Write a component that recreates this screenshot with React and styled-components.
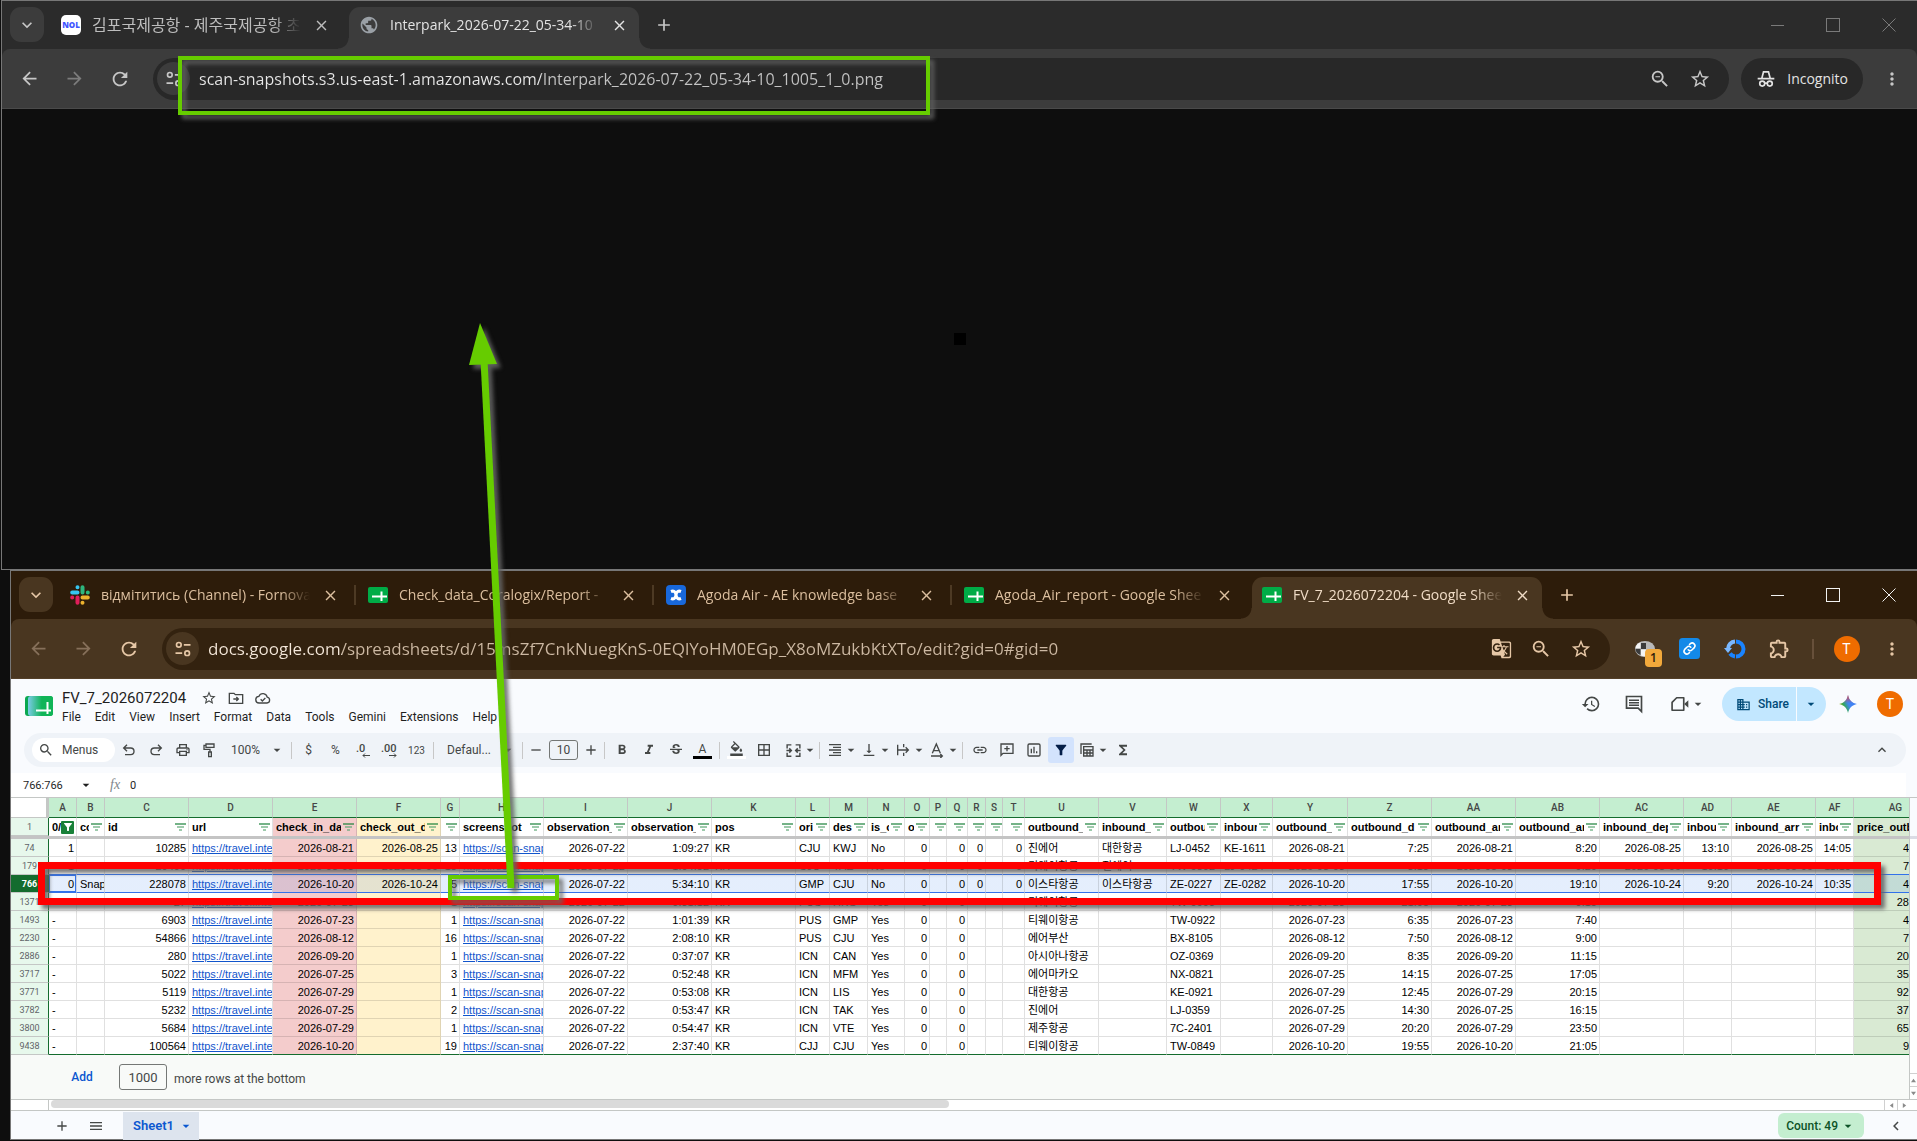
import React from 'react';
import styled, { createGlobalStyle, ThemeProvider, css } from 'styled-components';
import {
  MdArrowBack,
  MdArrowForward,
  MdRefresh,
  MdStarBorder,
  MdMoreVert,
  MdAdd,
  MdClose,
  MdSearch,
  MdFormatBold,
  MdFormatItalic,
  MdStrikethroughS,
  MdFormatColorFill,
  MdBorderAll,
  MdLink,
  MdFunctions,
  MdHistory,
  MdMenu,
  MdKeyboardArrowUp,
  MdKeyboardArrowDown,
  MdChevronLeft,
  MdZoomOut,
  MdGTranslate,
  MdDomain,
  MdPublic,
  MdOutlineExtension,
  MdArrowDropDown,
  MdOutlinePrint,
  MdFilterAlt,
  MdVerticalAlignBottom,
  MdFormatAlignRight,
} from 'react-icons/md';

const incognitoTheme = {
  strip: '#2b2b2b',
  bar: '#3c3c3c',
  barLine: '#4a4a4a',
  field: '#282828',
  chip: '#3c3c3c',
  icon: '#c7c7c7',
  dim: '#7c7c7c',
  tabText: '#bdbdbd',
  activeText: '#e3e3e3',
  host: '#e8e8e8',
  path: '#c4c4c4',
  control: '#7a7a7a',
  divider: '#4a4a4a',
};

const brownTheme = {
  strip: '#2d1c0a',
  bar: '#493620',
  barLine: '#544029',
  field: '#33220f',
  chip: '#493620',
  icon: '#e6c7a6',
  dim: '#86705a',
  tabText: '#dcbf9f',
  activeText: '#f0dcc6',
  host: '#f5e8da',
  path: '#cdb9a3',
  control: '#f2f2f2',
  divider: '#4d3a24',
};

const GlobalStyle = createGlobalStyle`
  * {
    box-sizing: border-box;
  }

  body {
    margin: 0;
    background: #0e0e0e;
    overflow: hidden;
    font-family: Roboto, 'Noto Sans CJK KR', sans-serif;
  }

  button, input, select {
    font: inherit;
    color: inherit;
    margin: 0;
    padding: 0;
    border: 0;
    background: none;
    outline: none;
  }

  svg {
    flex: none;
  }
`;

const Desktop = styled.main`
  position: relative;
  display: flex;
  flex-direction: column;
  min-height: 100vh;
  padding-bottom: 1px;
  overflow: hidden;
`;

/* ---------- browser chrome ---------- */

const Window = styled.section`
  display: flex;
  flex-direction: column;
  min-width: 0;
  margin-left: ${({ $left }) => $left}px;
  border: 1px solid #777;
  border-right: 0;
  background: ${({ theme }) => theme.strip};
  font-family: 'Open Sans', 'Noto Sans CJK KR', sans-serif;
  ${({ $grow }) => $grow && css`flex: 1;`}
`;

const TabStrip = styled.header`
  display: flex;
  align-items: flex-start;
  height: 48px;
  padding: 6px 0 0 8px;
  color: ${({ theme }) => theme.icon};
`;

const TabSearch = styled.button`
  display: flex;
  align-items: center;
  justify-content: center;
  width: 34px;
  height: 35px;
  margin-right: 7px;
  border-radius: 11px;
  background: ${({ theme }) => theme.chip};
`;

const Tabs = styled.nav`
  display: flex;
  gap: 8px;
  min-width: 0;
`;

const Tab = styled.div`
  position: relative;
  display: flex;
  align-items: center;
  width: 290px;
  height: 42px;
  padding: 0 10px 6px;
  color: ${({ theme }) => theme.tabText};

  ${({ $divided }) => $divided && css`
    &::after {
      content: '';
      position: absolute;
      right: -6px;
      top: 8px;
      width: 2px;
      height: 20px;
      background: ${({ theme }) => theme.divider};
    }
  `}

  ${({ $active, theme }) => $active && css`
    color: ${theme.activeText};
    background: ${theme.bar};
    border-radius: 11px 11px 0 0;

    &::before,
    &::after {
      content: '';
      position: absolute;
      bottom: 0;
      width: 11px;
      height: 11px;
    }

    &::before {
      right: 100%;
      background: radial-gradient(circle at 0 0, transparent 10px, ${theme.bar} 11px);
    }

    &::after {
      left: 100%;
      background: radial-gradient(circle at 100% 0, transparent 10px, ${theme.bar} 11px);
    }
  `}
`;

const TabTitle = styled.span`
  flex: 1;
  margin: 0 10px 0 11px;
  overflow: hidden;
  white-space: nowrap;
  font-size: 14px;
  line-height: 20px;
  mask-image: linear-gradient(to right, #000 calc(100% - 28px), transparent);

  &:lang(ko) {
    font-size: 16px;
  }
`;

const TabClose = styled.button`
  display: flex;
  align-items: center;
  justify-content: center;
  width: 20px;
  height: 20px;
`;

const NewTab = styled.button`
  display: flex;
  align-items: center;
  justify-content: center;
  width: 34px;
  height: 36px;
  margin-left: 8px;
`;

const WindowControls = styled.div`
  display: flex;
  margin-left: auto;
  color: ${({ theme }) => theme.control};

  button {
    display: flex;
    align-items: center;
    justify-content: center;
    width: 56px;
    height: 36px;
  }
`;

const AddressBar = styled.div`
  display: flex;
  align-items: center;
  height: 60px;
  padding: 0 3px 0 5px;
  border-bottom: 1px solid ${({ theme }) => theme.barLine};
  border-radius: 8px 8px 0 0;
  background: ${({ theme }) => theme.bar};
  color: ${({ theme }) => theme.icon};
`;

const BarButton = styled.button`
  position: relative;
  display: flex;
  align-items: center;
  justify-content: center;
  width: ${({ $wide }) => $wide || 45}px;
  height: 42px;
  color: ${({ theme, $dim }) => ($dim ? theme.dim : 'inherit')};
`;

const Omnibox = styled.div`
  display: flex;
  align-items: center;
  flex: 1;
  min-width: 0;
  height: 42px;
  margin: 0 12px 0 11px;
  padding: 0 9px 0 4px;
  border-radius: 21px;
  background: ${({ theme }) => theme.field};
`;

const SiteInfo = styled.button`
  display: flex;
  align-items: center;
  justify-content: center;
  flex: none;
  width: 33px;
  height: 33px;
  margin-right: 9px;
  border-radius: 50%;
  background: ${({ theme }) => theme.bar};
`;

const UrlInput = styled.input`
  flex: 1;
  min-width: 0;
  height: 30px;
  font-size: ${({ $large }) => ($large ? 17 : 16)}px;
  color: transparent;
  background: linear-gradient(
    to right,
    ${({ theme }) => theme.host} ${({ $host }) => $host}px,
    ${({ theme }) => theme.path} ${({ $host }) => $host}px
  );
  background-clip: text;
  -webkit-background-clip: text;
`;

const IncognitoChip = styled.button`
  display: flex;
  align-items: center;
  gap: 11px;
  height: 42px;
  margin-right: 6px;
  padding: 0 15px;
  border-radius: 21px;
  background: ${({ theme }) => theme.field};
  color: #e3e3e3;
  font-size: 14px;
`;

const BarDivider = styled.span`
  width: 2px;
  height: 20px;
  margin: 0 10px;
  background: #67503a;
`;

const Avatar = styled.span`
  display: flex;
  align-items: center;
  justify-content: center;
  width: 26px;
  height: 26px;
  border-radius: 50%;
  background: #ef6c00;
  color: #fff;
  font-family: Roboto, sans-serif;
  font-size: 14px;
`;

const ExtensionBadge = styled.span`
  position: absolute;
  left: 23px;
  top: 21px;
  width: 17px;
  height: 18px;
  border-radius: 4px;
  background: #f2a93b;
  color: #2d1c0a;
  font-size: 12px;
  font-weight: 600;
  line-height: 18px;
`;

const BlankImage = styled.div`
  display: flex;
  align-items: center;
  justify-content: center;
  flex: 1;
  background: #0e0e0e;

  span {
    width: 12px;
    height: 12px;
    background: #000;
  }
`;

/* ---------- spreadsheet ---------- */

const Sheet = styled.div`
  display: flex;
  flex-direction: column;
  background: #f9fbfe;
  color: #444746;
  font-family: Roboto, 'Noto Sans CJK KR', sans-serif;
`;

const DocHeader = styled.div`
  display: flex;
  height: 54px;
  padding: 8px 14px 0;
`;

const DocLogo = styled.a`
  height: 20px;
  margin: 9px 9px 0 0;
`;

const TitleRow = styled.div`
  display: flex;
  align-items: center;
  height: 22px;
`;

const TitleInput = styled.input`
  width: 133px;
  color: #1f1f1f;
  font-size: 15px;
`;

const TitleButton = styled.button`
  display: flex;
  align-items: center;
  justify-content: center;
  width: 27px;
`;

const MenuBar = styled.nav`
  display: flex;
  gap: 14px;
  color: #1f1f1f;
  font-size: 12px;
  line-height: 17px;
`;

const HeaderActions = styled.div`
  display: flex;
  align-items: center;
  gap: 15px;
  height: 34px;
  margin-left: auto;
`;

const HeaderButton = styled.button`
  display: flex;
  align-items: center;
  justify-content: center;
  min-width: 28px;
`;

const MeetButton = styled(HeaderButton)`
  width: 44px;
  padding-left: 6px;
`;

const ShareGroup = styled.div`
  display: flex;
  height: 34px;
  margin-right: -7px;
  border-radius: 17px;
  overflow: hidden;
  background: #c2e7ff;
  color: #004a77;
  font-size: 12px;
  font-weight: 500;

  button {
    display: flex;
    align-items: center;
    gap: 7px;
    padding: 0 7px 0 14px;
  }

  button + button {
    padding: 0 7px 0 6px;
    border-left: 1px solid #f9fbfe;
  }
`;

const Toolbar = styled.div`
  display: flex;
  align-items: center;
  height: 34px;
  margin: 0 11px 6px 13px;
  padding: 0 11px 0 8px;
  border-radius: 17px;
  background: #eff3f8;
`;

const MenuSearch = styled.button`
  display: flex;
  align-items: center;
  gap: 8px;
  width: 83px;
  height: 24px;
  padding-left: 6px;
  border-radius: 12px;
  background: #fff;
  font-size: 12px;
`;

const Tool = styled.button`
  display: flex;
  align-items: center;
  justify-content: center;
  width: 27px;
  height: 26px;
  font-size: ${({ $small }) => ($small ? 10 : 12)}px;
`;

const StepTool = styled(Tool)`
  width: 20px;
`;

const SplitTool = styled.button`
  display: flex;
  align-items: center;
  width: ${({ $wide }) => ($wide ? 39 : 34)}px;
  height: 26px;
  padding-left: ${({ $wide }) => ($wide ? 8 : 4)}px;
`;

const ActiveTool = styled(Tool)`
  width: 26px;
  margin: 0 1px;
  border-radius: 3px;
  background: #d3e3fd;
  color: #041e49;
`;

const SwatchTool = styled(Tool)`
  flex-direction: column;

  &::after {
    content: '';
    width: 19px;
    height: 3px;
    background: ${({ $swatch }) => $swatch};
  }
`;

const ToolDivider = styled.span`
  width: 1px;
  height: 17px;
  margin: 0 3px;
  background: #c7c7c7;
`;

const Picker = styled.label`
  display: flex;
  align-items: center;
  width: ${({ $width }) => $width}px;
  padding: 0 3px 0 ${({ $indent }) => $indent}px;
  font-size: 12px;

  select {
    flex: 1;
    min-width: 0;
    appearance: none;
  }
`;

const SizeInput = styled.input`
  width: 29px;
  height: 20px;
  margin: 0 3px;
  border: 1px solid #747775;
  border-radius: 3px;
  text-align: center;
  font-size: 12px;
`;

const FormulaBar = styled.div`
  display: flex;
  align-items: center;
  height: 24px;
  margin-right: 11px;
  padding-left: 12px;
  background: #fff;
  color: #1f1f1f;
  font-size: 11px;
`;

const NameBox = styled.input`
  width: 55px;
`;

const FormulaMark = styled.label`
  width: 32px;
  margin-left: 4px;
  padding-left: 12px;
  color: #80868b;
  font-family: 'Liberation Serif', serif;
  font-size: 14px;
  font-style: italic;
`;

const FormulaInput = styled.input`
  flex: 1;
`;

const GridArea = styled.div`
  display: flex;
  border-top: 1px solid #c4c7c5;
`;

const Viewport = styled.div`
  flex: 1;
  min-width: 0;
  overflow: hidden;
`;

const Grid = styled.table`
  width: 100%;
  min-width: 1927px;
  table-layout: fixed;
  border-collapse: separate;
  border-spacing: 0;
  background: #fff;
  color: #000;
  font-family: 'Liberation Sans', 'Noto Sans CJK KR', sans-serif;
  font-size: 11px;
  line-height: 16px;
`;

const ColumnHead = styled.th`
  height: 20px;
  padding: 0;
  border-right: 1px solid #c4c7c5;
  border-bottom: 1px solid #146c2e;
  background: #c4eed0;
  color: #444746;
  font-family: Roboto, sans-serif;
  font-size: 10px;
  font-weight: 500;
  line-height: 18px;
`;

const Corner = styled.td`
  padding: 0;
  border-right: 3px solid #c4c7c5;
  border-bottom: 1px solid #c4c7c5;
  background: #fff;
`;

const RowHead = styled.th`
  height: 18px;
  padding: 1px 0 0;
  border-right: 1px solid #146c2e;
  border-bottom: 1px solid #c4c7c5;
  background: ${({ $selected }) => ($selected ? '#146c2e' : '#e7f8ec')};
  color: ${({ $selected }) => ($selected ? '#fff' : '#5f6368')};
  font-family: Roboto, sans-serif;
  font-size: 9px;
  font-weight: ${({ $selected }) => ($selected ? 700 : 400)};
`;

const Cell = styled.td`
  height: 18px;
  padding: 1px ${({ $cut }) => ($cut ? 28 : 2)}px 0 3px;
  overflow: hidden;
  white-space: nowrap;
  text-align: ${({ $right }) => ($right ? 'right' : 'left')};
  border-right: 1px solid rgba(0, 0, 0, 0.12);
  border-bottom: 1px solid ${({ $line }) => $line || 'rgba(0, 0, 0, 0.12)'};
  background-color: ${({ $fill }) => $fill || '#fff'};
  ${({ $selected }) => $selected && css`
    background-image: linear-gradient(rgba(14, 101, 235, 0.11), rgba(14, 101, 235, 0.11));
  `}
  ${({ $current }) => $current && css`
    box-shadow: inset 0 0 0 1px #3271ea;
  `}

  a {
    color: #1155cc;
  }
`;

const FieldCell = styled.td`
  height: 18px;
  padding: 0;
  border-right: 1px solid rgba(0, 0, 0, 0.12);
  background: ${({ $fill }) => $fill || '#fff'};
  font-weight: 700;
`;

const Field = styled.div`
  display: flex;
  align-items: center;
  gap: ${({ $tight }) => ($tight ? 0 : 2)}px;
  height: 18px;
  padding: 0 2px 0 3px;

  span {
    flex: 1;
    min-width: 0;
    overflow: hidden;
    white-space: nowrap;
  }

  button {
    display: flex;
  }
`;

const FilterOn = styled.button`
  width: 13px;
  height: 13px;
  align-items: center;
  justify-content: center;
  border-radius: 1px;
  background: #188038;
  color: #fff;
`;

const FreezeLine = styled.td`
  height: 3px;
  padding: 0;
  background: #c4c4c4;
`;

const AddRows = styled.div`
  display: flex;
  align-items: center;
  height: 44px;
  padding-left: 48px;
  background: #f8faf8;
  font-size: 13px;

  button {
    width: 60px;
    padding-right: 14px;
    color: #0b57d0;
    font-size: 12px;
    font-weight: 500;
    text-align: center;
  }

  input {
    width: 48px;
    height: 26px;
    margin-right: 7px;
    border: 1px solid #747775;
    border-radius: 3px;
    text-align: center;
  }

  label {
    padding-top: 4px;
    font-size: 12px;
  }
`;

const VerticalScroll = styled.div`
  display: flex;
  flex-direction: column;
  width: 8px;
  border-left: 1px solid #c4c7c5;
  background: linear-gradient(#f9fbfe 38px, #dadce5 38px, #dadce5 41px, #fff 41px);

  button {
    display: flex;
    align-items: center;
    justify-content: center;
    height: 13px;
    border-top: 1px solid #d0d0d0;
    color: #8a8a8a;
  }

  button:first-child {
    margin-top: auto;
  }
`;

const HorizontalScroll = styled.div`
  display: flex;
  height: 11px;
  padding-left: 37px;
  border-top: 1px solid #c4c7c5;
  background: #fff;

  button {
    display: flex;
    align-items: center;
    justify-content: center;
    width: 13px;
    border-left: 1px solid #d0d0d0;
    color: #8a8a8a;
  }

  button:last-child {
    width: 20px;
    padding-right: 7px;
  }
`;

const Track = styled.div`
  flex: 1;
  padding-left: 2px;
  border-left: 1px solid #c4c7c5;

  &::before {
    content: '';
    display: block;
    width: 49%;
    height: 8px;
    border-radius: 4px;
    background: #dadada;
  }
`;

const SheetBar = styled.footer`
  display: flex;
  align-items: center;
  height: 29px;
  padding: 1px 4px 0 34px;
  border-top: 1px solid #c4c7c5;
`;

const SheetBarButton = styled.button`
  display: flex;
  align-items: center;
  justify-content: center;
  width: 34px;
  height: 28px;
`;

const SheetTab = styled.button`
  display: flex;
  align-items: center;
  gap: 4px;
  height: 28px;
  margin-left: 10px;
  padding: 0 5px 0 10px;
  background: #dde4ee;
  color: #0b57d0;
  font-size: 13px;
  font-weight: 600;
`;

const CountChip = styled.button`
  display: flex;
  align-items: center;
  gap: 2px;
  height: 25px;
  margin: 0 15px 0 auto;
  padding: 0 8px;
  border-radius: 6px;
  background: #c4eed0;
  color: #0d5327;
  font-size: 12px;
  font-weight: 500;
`;

/* ---------- markup drawn over the windows ---------- */

const Mark = styled.div`
  position: absolute;
  left: ${({ $x }) => $x}px;
  top: ${({ $y }) => $y}px;
  width: ${({ $w }) => $w}px;
  height: ${({ $h }) => $h}px;
  border: ${({ $line }) => $line}px solid ${({ $color }) => $color};
  filter: drop-shadow(4px 4px 2px rgba(100, 100, 100, 0.9));
  pointer-events: none;
`;

const Arrow = styled.svg`
  position: absolute;
  left: 460px;
  top: 315px;
  filter: drop-shadow(4px 4px 2px rgba(100, 100, 100, 0.9));
  pointer-events: none;
`;

/* ---------- icons ---------- */

const Line = ({ size = 16, width = 2, children }) => (
  <svg
    width={size}
    height={size}
    viewBox="0 0 24 24"
    fill="none"
    stroke="currentColor"
    strokeWidth={width}
    aria-hidden="true"
  >
    {children}
  </svg>
);

const TuneIcon = () => (
  <Line size={20}>
    <circle cx="7" cy="7" r="2.8" />
    <path d="M13 7h8M3 17h8" />
    <circle cx="17" cy="17" r="2.8" />
  </Line>
);

const UndoIcon = () => (
  <Line>
    <path d="M6 19h8.500a5 5 0 0 0 0-10H4.500M9 4 4 9l5 5" />
  </Line>
);

const RedoIcon = () => (
  <Line>
    <path d="M18 19H9.500a5 5 0 0 1 0-10h10M15 4l5 5-5 5" />
  </Line>
);

const RollerIcon = () => (
  <Line>
    <path d="M6 3h12v5H6zM6 5H3v6h9v4M10 15h4v7h-4z" />
  </Line>
);

const MergeIcon = () => (
  <Line size={17}>
    <path d="M9 4H3v5M15 4h6v5M9 20H3v-5M15 20h6v-5M2 12h7M22 12h-7M6 9l3 3-3 3M18 9l-3 3 3 3" />
  </Line>
);

const WrapIcon = () => (
  <Line>
    <path d="M4 4v16M13 3v5M13 16v5M4 12h16M16 8l4 4-4 4" />
  </Line>
);

const RotateIcon = () => (
  <Line>
    <path d="M5 17 11 3l6 14M7 13h8M3 21h17M17 18l3 3-3 3" />
  </Line>
);

const CommentAddIcon = () => (
  <Line>
    <path d="M3 20V3h18v14H6zM12 6v8M8 10h8" />
  </Line>
);

const ChartIcon = () => (
  <Line>
    <rect x="3" y="3" width="18" height="18" rx="2" />
    <path d="M8 10v7M12 7v10M16 14v3" />
  </Line>
);

const TableIcon = () => (
  <Line>
    <path d="M3 18V3h16M7 7h14v14H7zM7 12h14M7 16.500h14M12 12v9M16.500 12v9" />
  </Line>
);

const DecimalIcon = ({ more }) => (
  <svg width="18" height="18" viewBox="0 0 18 18" aria-hidden="true">
    <text x={more ? 0 : 2} y="11" fontSize="11" fontWeight="500" fill="currentColor">
      {more ? '.00' : '.0'}
    </text>
    <path
      d={more ? 'M8 14.500h7M13 12.500l2 2-2 2' : 'M16 14.500H9M11 12.500l-2 2 2 2'}
      fill="none"
      stroke="currentColor"
    />
  </svg>
);

const FolderMoveIcon = () => (
  <Line>
    <path d="M2 5h7l2 2h11v13H2zM8 13.500h7M12.500 10.500l3 3-3 3" />
  </Line>
);

const CloudDoneIcon = () => (
  <Line>
    <path d="M6.500 19.500a5 5 0 0 1-.6-10A6.500 6.500 0 0 1 18.300 10.800a4.400 4.400 0 0 1-.3 8.700zM8.500 14l2.500 2.500 4.500-4.500" />
  </Line>
);

const CommentIcon = () => (
  <Line size={20}>
    <path d="M3 3h18v18l-4-4H3zM6 7.500h12M6 10.500h12M6 13.500h12" />
  </Line>
);

const MeetIcon = () => (
  <Line size={20}>
    <path d="M8 4.500h8.500v15H2.500V10z" strokeLinejoin="round" />
    <path d="M17 12l5-4.500v9z" fill="currentColor" stroke="none" />
  </Line>
);

const IncognitoIcon = () => (
  <Line size={20}>
    <path d="M2 11.500h20M7 11l2-7.500h6L17 11" />
    <circle cx="7.500" cy="17.500" r="3" />
    <circle cx="16.500" cy="17.500" r="3" />
    <path d="M10.500 17h3" />
  </Line>
);

const FilterLines = () => (
  <svg width="11" height="8" viewBox="0 0 11 8" aria-hidden="true">
    <path d="M0 1h11" stroke="#188038" strokeWidth="1.200" />
    <path d="M2 4h7" stroke="#5da675" strokeWidth="1.200" />
    <path d="M4 7h3" stroke="#5da675" strokeWidth="1.200" />
  </svg>
);

const Triangle = ({ d }) => (
  <svg width="5" height="5" viewBox="0 0 6 6" aria-hidden="true">
    <path d={d} fill="currentColor" />
  </svg>
);

const SheetsFavicon = () => (
  <svg width="20" height="16" viewBox="0 0 20 16" aria-hidden="true">
    <rect width="20" height="16" rx="2" fill="#00ac47" />
    <path d="M4 9.500h15M13.500 4.500V14" stroke="#fff" strokeWidth="2" />
  </svg>
);

const SheetsLogo = () => (
  <svg width="28" height="20" viewBox="0 0 28 20" aria-hidden="true">
    <defs>
      <linearGradient id="sheetsFill">
        <stop offset="0" stopColor="#7ccbe8" />
        <stop offset="0.550" stopColor="#10b457" />
      </linearGradient>
    </defs>
    <rect width="28" height="20" rx="3" fill="#0aa850" />
    <rect x="3" width="25" height="20" rx="3" fill="url(#sheetsFill)" />
    <path d="M11 14.500h15M22.500 6v12" stroke="#fff" strokeWidth="2" />
  </svg>
);

const SlackIcon = () => (
  <svg width="20" height="20" viewBox="0 0 20 20" strokeWidth="4" strokeLinecap="round" aria-hidden="true">
    <path d="M7.500 2.200v.01M2.200 7.500h5.300" stroke="#36c5f0" />
    <path d="M17.800 7.500h.01M12.500 2.200v5.300" stroke="#2eb67d" />
    <path d="M12.500 17.800v.01M12.500 12.500h5.300" stroke="#ecb22e" />
    <path d="M2.200 12.500h.01M7.500 12.500v5.300" stroke="#e01e5a" />
  </svg>
);

const ConfluenceIcon = () => (
  <svg width="20" height="20" viewBox="0 0 20 20" aria-hidden="true">
    <rect width="20" height="20" rx="4" fill="#1868db" />
    <path
      d="M5 6.500c2.500-1 4.500 0 5 3.500.5-3.500 2.500-4.500 5-3.500M5 13.500c2.500 1 4.500 0 5-3.500.5 3.500 2.500 4.500 5 3.500"
      fill="none"
      stroke="#fff"
      strokeWidth="3"
    />
  </svg>
);

const NolIcon = () => (
  <svg width="20" height="20" viewBox="0 0 20 20" aria-hidden="true">
    <rect width="20" height="20" rx="5" fill="#fff" />
    <text x="10" y="13" textAnchor="middle" fontSize="8" fontWeight="800" fill="#4154ff">
      NOL
    </text>
  </svg>
);

const GeminiIcon = () => (
  <svg width="18" height="18" viewBox="0 0 18 18" aria-hidden="true">
    <defs>
      <linearGradient id="spark" x1="0" y1="0.800" x2="1" y2="0.300">
        <stop offset="0" stopColor="#fbbc04" />
        <stop offset="0.300" stopColor="#34a853" />
        <stop offset="0.550" stopColor="#4285f4" />
        <stop offset="1" stopColor="#3c7bf0" />
      </linearGradient>
      <linearGradient id="sparkTop" x1="0" y1="0" x2="0" y2="1">
        <stop offset="0" stopColor="#ea4335" />
        <stop offset="0.450" stopColor="#ea4335" stopOpacity="0" />
      </linearGradient>
    </defs>
    <path d="M9 0c1 5 4 8 9 9-5 1-8 4-9 9-1-5-4-8-9-9 5-1 8-4 9-9z" fill="url(#spark)" />
    <path d="M9 0c1 5 4 8 9 9-5 1-8 4-9 9-1-5-4-8-9-9 5-1 8-4 9-9z" fill="url(#sparkTop)" />
  </svg>
);

const ShieldIcon = () => (
  <svg width="22" height="18" viewBox="0 0 22 18" aria-hidden="true">
    <ellipse cx="11" cy="9" rx="10" ry="8" fill="#b9b9b9" />
    <path d="M1.500 9h5v6C3.500 14 1.500 12 1.500 9zM7 3h5v6H7z" fill="#3c3c3c" />
    <path d="M1.500 8C2 5 4 3 6.500 2.500V8zM7 9.500h5V16c-2 .5-4 0-5-.5z" fill="#f4f4f4" />
  </svg>
);

const LinkExtensionIcon = () => (
  <svg width="21" height="21" viewBox="0 0 24 24" aria-hidden="true">
    <rect width="24" height="24" rx="4" fill="#1389e8" />
    <g fill="none" stroke="#fff" strokeWidth="1.800" strokeLinecap="round">
      <path d="M10.500 13.500a3.200 3.200 0 0 0 4.500 0l2.500-2.500a3.200 3.200 0 0 0-4.500-4.500L12 7.500" />
      <path d="M13.500 10.500a3.200 3.200 0 0 0-4.500 0L6.500 13a3.200 3.200 0 0 0 4.500 4.500l1-1" />
    </g>
  </svg>
);

const CycleIcon = () => (
  <svg width="22" height="22" viewBox="0 0 22 22" fill="none" strokeWidth="4" aria-hidden="true">
    <path d="M12 3.500a7.500 7.500 0 0 1 0 15" stroke="#1a84ff" />
    <path d="M11 18.500a7.500 7.500 0 0 1-5-3" stroke="#1a84ff" />
    <path d="M4 11a7.500 7.500 0 0 1 7-7.500" stroke="#7ab8ff" />
    <path d="M0 10h8l-4 5z" fill="#7ab8ff" />
  </svg>
);

const MinimizeIcon = () => (
  <svg width="13" height="13" viewBox="0 0 13 13" stroke="currentColor" aria-hidden="true">
    <path d="M0 6.500h13" />
  </svg>
);

const MaximizeIcon = () => (
  <svg width="14" height="14" viewBox="0 0 14 14" stroke="currentColor" fill="none" aria-hidden="true">
    <rect x="0.500" y="0.500" width="13" height="13" />
  </svg>
);

const CrossIcon = () => (
  <svg width="14" height="14" viewBox="0 0 14 14" stroke="currentColor" aria-hidden="true">
    <path d="m.5.5 13 13M13.500.5l-13 13" />
  </svg>
);

/* ---------- data ---------- */

const PINK = '#f4cccc';
const CREAM = '#fff2cc';
const GREEN = '#d9ead3';

const columns = [
  { key: 'A', width: 28, field: '0/', filtered: true },
  { key: 'B', width: 28, field: 'co' },
  { key: 'C', width: 84, field: 'id', right: true },
  { key: 'D', width: 84, field: 'url', link: true },
  { key: 'E', width: 84, field: 'check_in_da', right: true, fill: PINK },
  { key: 'F', width: 84, field: 'check_out_d', right: true, fill: CREAM },
  { key: 'G', width: 19, field: '', right: true },
  { key: 'H', width: 84, field: 'screenshot', link: true },
  { key: 'I', width: 84, field: 'observation_', right: true },
  { key: 'J', width: 84, field: 'observation_', right: true },
  { key: 'K', width: 84, field: 'pos' },
  { key: 'L', width: 34, field: 'ori' },
  { key: 'M', width: 38, field: 'des' },
  { key: 'N', width: 37, field: 'is_o' },
  { key: 'O', width: 25, field: 'o', right: true },
  { key: 'P', width: 17, field: '' },
  { key: 'Q', width: 21, field: '', right: true },
  { key: 'R', width: 18, field: '', right: true },
  { key: 'S', width: 17, field: '' },
  { key: 'T', width: 22, field: '', right: true },
  { key: 'U', width: 74, field: 'outbound_' },
  { key: 'V', width: 68, field: 'inbound_' },
  { key: 'W', width: 54, field: 'outbou' },
  { key: 'X', width: 52, field: 'inboun' },
  { key: 'Y', width: 75, field: 'outbound_' },
  { key: 'Z', width: 84, field: 'outbound_d', right: true },
  { key: 'AA', width: 84, field: 'outbound_ar', right: true },
  { key: 'AB', width: 84, field: 'outbound_ar', right: true },
  { key: 'AC', width: 84, field: 'inbound_dep', right: true },
  { key: 'AD', width: 48, field: 'inbou', right: true },
  { key: 'AE', width: 84, field: 'inbound_arr', right: true },
  { key: 'AF', width: 38, field: 'inbo', right: true },
  { key: 'AG', width: 84, field: 'price_outb', right: true, fill: GREEN, cut: true },
].map((column) => (column.key === 'Y' ? { ...column, right: true } : column));

const flight = (n, flag, id, checkIn, stops, time, ori, des, airline, code, dep, arr, price, back) => ({
  n,
  A: flag,
  B: n === 766 ? 'Snap' : '',
  C: id,
  D: 'https://travel.inte',
  E: checkIn,
  F: back ? back.date : '',
  G: stops,
  H: 'https://scan-snap',
  I: '2026-07-22',
  J: time,
  K: 'KR',
  L: ori,
  M: des,
  N: back ? 'No' : 'Yes',
  O: '0',
  Q: '0',
  R: back ? '0' : '',
  T: back ? '0' : '',
  U: airline,
  V: back ? back.airline : '',
  W: code,
  X: back ? back.code : '',
  Y: checkIn,
  Z: dep,
  AA: checkIn,
  AB: arr,
  AC: back ? back.date : '',
  AD: back ? back.dep : '',
  AE: back ? back.date : '',
  AF: back ? back.arr : '',
  AG: price,
});

const rows = [
  flight(74, '1', '10285', '2026-08-21', '13', '1:09:27', 'CJU', 'KWJ', '진에어', 'LJ-0452', '7:25', '8:20', '4', {
    date: '2026-08-25', airline: '대한항공', code: 'KE-1611', dep: '13:10', arr: '14:05',
  }),
  flight(179, '1', '20490', '2026-08-03', '18', '1:04:52', 'CJU', 'TAE', '티웨이항공', 'TW-0802', '8:15', '9:20', '7', {
    date: '2026-08-06', airline: '진에어', code: 'LJ-0424', dep: '10:10', arr: '11:15',
  }),
  flight(766, '0', '228078', '2026-10-20', '5', '5:34:10', 'GMP', 'CJU', '이스타항공', 'ZE-0227', '17:55', '19:10', '4', {
    date: '2026-10-24', airline: '이스타항공', code: 'ZE-0282', dep: '9:20', arr: '10:35',
  }),
  flight(1371, '-', '27', '2026-07-23', '1', '0:31:12', 'PUS', 'HKG', '티웨이항공', 'TW-0903', '21:05', '0:15', '28'),
  flight(1493, '-', '6903', '2026-07-23', '1', '1:01:39', 'PUS', 'GMP', '티웨이항공', 'TW-0922', '6:35', '7:40', '4'),
  flight(2230, '-', '54866', '2026-08-12', '16', '2:08:10', 'PUS', 'CJU', '에어부산', 'BX-8105', '7:50', '9:00', '7'),
  flight(2886, '-', '280', '2026-09-20', '1', '0:37:07', 'ICN', 'CAN', '아시아나항공', 'OZ-0369', '8:35', '11:15', '20'),
  flight(3717, '-', '5022', '2026-07-25', '3', '0:52:48', 'ICN', 'MFM', '에어마카오', 'NX-0821', '14:15', '17:05', '35'),
  flight(3771, '-', '5119', '2026-07-29', '1', '0:53:08', 'ICN', 'LIS', '대한항공', 'KE-0921', '12:45', '20:15', '92'),
  flight(3782, '-', '5232', '2026-07-25', '2', '0:53:47', 'ICN', 'TAK', '진에어', 'LJ-0359', '14:30', '16:15', '37'),
  flight(3800, '-', '5684', '2026-07-29', '1', '0:54:47', 'ICN', 'VTE', '제주항공', '7C-2401', '20:20', '23:50', '65'),
  flight(9438, '-', '100564', '2026-10-20', '19', '2:37:40', 'CJJ', 'CJU', '티웨이항공', 'TW-0849', '19:55', '21:05', '9'),
];

const incognitoTabs = [
  { title: '김포국제공항 - 제주국제공항 초', icon: <NolIcon />, lang: 'ko' },
  { title: 'Interpark_2026-07-22_05-34-10', icon: <MdPublic size={20} color="#9aa0a6" />, active: true },
];

const workTabs = [
  { title: 'відмітитись (Channel) - Fornova', icon: <SlackIcon />, divided: true, lang: 'uk' },
  { title: 'Check_data_Coralogix/Report -', icon: <SheetsFavicon />, divided: true },
  { title: 'Agoda Air - AE knowledge base', icon: <ConfluenceIcon />, divided: true },
  { title: 'Agoda_Air_report - Google Shee', icon: <SheetsFavicon /> },
  { title: 'FV_7_2026072204 - Google Shee', icon: <SheetsFavicon />, active: true },
];

const menus = ['File', 'Edit', 'View', 'Insert', 'Format', 'Data', 'Tools', 'Gemini', 'Extensions', 'Help'];

/* ---------- components ---------- */

const Strip = ({ tabs }) => (
  <TabStrip>
    <TabSearch aria-label="Search tabs">
      <MdKeyboardArrowDown size={20} />
    </TabSearch>
    <Tabs>
      {tabs.map((tab) => (
        <Tab key={tab.title} $active={tab.active} $divided={tab.divided}>
          {tab.icon}
          <TabTitle lang={tab.lang}>{tab.title}</TabTitle>
          <TabClose aria-label="Close tab">
            <MdClose size={17} />
          </TabClose>
        </Tab>
      ))}
    </Tabs>
    <NewTab aria-label="New tab">
      <MdAdd size={20} />
    </NewTab>
    <WindowControls>
      <button aria-label="Minimize"><MinimizeIcon /></button>
      <button aria-label="Maximize"><MaximizeIcon /></button>
      <button aria-label="Close"><CrossIcon /></button>
    </WindowControls>
  </TabStrip>
);

const Navigation = ({ canGoBack }) => (
  <>
    <BarButton aria-label="Back" $dim={!canGoBack}><MdArrowBack size={21} /></BarButton>
    <BarButton aria-label="Forward" $dim><MdArrowForward size={21} /></BarButton>
    <BarButton aria-label="Reload"><MdRefresh size={22} /></BarButton>
  </>
);

const IncognitoWindow = () => (
  <ThemeProvider theme={incognitoTheme}>
    <Window $left={1} $grow>
      <Strip tabs={incognitoTabs} />
      <AddressBar>
        <Navigation canGoBack />
        <Omnibox>
          <SiteInfo aria-label="Site information"><TuneIcon /></SiteInfo>
          <UrlInput
            aria-label="Address"
            $host={342}
            defaultValue="scan-snapshots.s3.us-east-1.amazonaws.com/Interpark_2026-07-22_05-34-10_1005_1_0.png"
          />
          <BarButton aria-label="Zoom" $wide={40}><MdZoomOut size={22} /></BarButton>
          <BarButton aria-label="Bookmark" $wide={40}><MdStarBorder size={22} /></BarButton>
        </Omnibox>
        <IncognitoChip>
          <IncognitoIcon />
          Incognito
        </IncognitoChip>
        <BarButton aria-label="Menu"><MdMoreVert size={20} /></BarButton>
      </AddressBar>
      <BlankImage><span /></BlankImage>
    </Window>
  </ThemeProvider>
);

const SheetHeader = () => (
  <DocHeader>
    <DocLogo href="#home" aria-label="Sheets home"><SheetsLogo /></DocLogo>
    <div>
      <TitleRow>
        <TitleInput aria-label="Document title" defaultValue="FV_7_2026072204" />
        <TitleButton aria-label="Star"><MdStarBorder size={16} /></TitleButton>
        <TitleButton aria-label="Move"><FolderMoveIcon /></TitleButton>
        <TitleButton aria-label="Saved to Drive"><CloudDoneIcon /></TitleButton>
      </TitleRow>
      <MenuBar>
        {menus.map((name) => <button key={name}>{name}</button>)}
      </MenuBar>
    </div>
    <HeaderActions>
      <HeaderButton aria-label="Version history"><MdHistory size={20} /></HeaderButton>
      <HeaderButton aria-label="Comments"><CommentIcon /></HeaderButton>
      <MeetButton aria-label="Meet">
        <MeetIcon />
        <MdArrowDropDown size={16} />
      </MeetButton>
      <ShareGroup>
        <button>
          <MdDomain size={15} />
          Share
        </button>
        <button aria-label="Share options"><MdArrowDropDown size={16} /></button>
      </ShareGroup>
      <HeaderButton aria-label="Gemini"><GeminiIcon /></HeaderButton>
      <Avatar>T</Avatar>
    </HeaderActions>
  </DocHeader>
);

const CollapseTool = styled(Tool)`
  margin-left: auto;
`;

const SheetToolbar = () => (
  <Toolbar>
    <MenuSearch>
      <MdSearch size={16} />
      Menus
    </MenuSearch>
    <Tool aria-label="Undo"><UndoIcon /></Tool>
    <Tool aria-label="Redo"><RedoIcon /></Tool>
    <Tool aria-label="Print"><MdOutlinePrint size={16} /></Tool>
    <Tool aria-label="Paint format"><RollerIcon /></Tool>
    <Picker $width={65} $indent={8}>
      <select aria-label="Zoom">
        <option>100%</option>
      </select>
      <MdArrowDropDown size={16} />
    </Picker>
    <ToolDivider />
    <Tool>$</Tool>
    <Tool>%</Tool>
    <Tool aria-label="Decrease decimal places"><DecimalIcon /></Tool>
    <Tool aria-label="Increase decimal places"><DecimalIcon more /></Tool>
    <Tool $small>123</Tool>
    <ToolDivider />
    <Picker $width={82} $indent={10}>
      <select aria-label="Font">
        <option>Defaul...</option>
      </select>
      <MdArrowDropDown size={16} />
    </Picker>
    <ToolDivider />
    <StepTool aria-label="Decrease font size">
      <Line><path d="M5 12h14" /></Line>
    </StepTool>
    <SizeInput aria-label="Font size" defaultValue="10" />
    <StepTool aria-label="Increase font size"><MdAdd size={16} /></StepTool>
    <ToolDivider />
    <Tool aria-label="Bold"><MdFormatBold size={16} /></Tool>
    <Tool aria-label="Italic"><MdFormatItalic size={16} /></Tool>
    <Tool aria-label="Strikethrough"><MdStrikethroughS size={16} /></Tool>
    <SwatchTool aria-label="Text color" $swatch="#000">A</SwatchTool>
    <ToolDivider />
    <SwatchTool aria-label="Fill color" $swatch="#fff"><MdFormatColorFill size={15} /></SwatchTool>
    <Tool aria-label="Borders"><MdBorderAll size={16} /></Tool>
    <SplitTool aria-label="Merge cells" $wide><MergeIcon /><MdArrowDropDown size={16} /></SplitTool>
    <ToolDivider />
    <SplitTool aria-label="Horizontal align"><MdFormatAlignRight size={16} /><MdArrowDropDown size={16} /></SplitTool>
    <SplitTool aria-label="Vertical align"><MdVerticalAlignBottom size={16} /><MdArrowDropDown size={16} /></SplitTool>
    <SplitTool aria-label="Text wrapping"><WrapIcon /><MdArrowDropDown size={16} /></SplitTool>
    <SplitTool aria-label="Text rotation"><RotateIcon /><MdArrowDropDown size={16} /></SplitTool>
    <ToolDivider />
    <Tool aria-label="Insert link"><MdLink size={16} /></Tool>
    <Tool aria-label="Insert comment"><CommentAddIcon /></Tool>
    <Tool aria-label="Insert chart"><ChartIcon /></Tool>
    <ActiveTool aria-label="Filter"><MdFilterAlt size={16} /></ActiveTool>
    <SplitTool aria-label="Table views"><TableIcon /><MdArrowDropDown size={16} /></SplitTool>
    <Tool aria-label="Functions"><MdFunctions size={16} /></Tool>
    <CollapseTool aria-label="Hide the menus"><MdKeyboardArrowUp size={16} /></CollapseTool>
  </Toolbar>
);

const SheetGrid = () => (
  <Grid>
    <colgroup>
      <col width="38" />
      {columns.map((column) => <col key={column.key} width={column.width} />)}
      <col />
    </colgroup>
    <thead>
      <tr>
        <Corner />
        {columns.map((column) => <ColumnHead key={column.key} scope="col">{column.key}</ColumnHead>)}
        <td />
      </tr>
    </thead>
    <tbody>
      <tr>
        <RowHead scope="row">1</RowHead>
        {columns.map((column) => (
          <FieldCell key={column.key} $fill={column.fill}>
            <Field $tight={column.filtered}>
              <span>{column.field}</span>
              {column.filtered ? (
                <FilterOn aria-label="Filtered"><MdFilterAlt size={12} /></FilterOn>
              ) : (
                !column.cut && <button aria-label={`Filter ${column.key}`}><FilterLines /></button>
              )}
            </Field>
          </FieldCell>
        ))}
        <td />
      </tr>
      <tr>
        <FreezeLine colSpan={columns.length + 2} />
      </tr>
      {rows.map((row, index) => {
        const selected = row.n === 766;
        const beforeSelected = rows[index + 1] && rows[index + 1].n === 766;
        const last = index === rows.length - 1;
        const line = selected || beforeSelected ? '#3271ea' : last && '#146c2e';
        return (
          <tr key={row.n}>
            <RowHead scope="row" $selected={selected}>{row.n}</RowHead>
            {columns.map((column) => (
              <Cell
                key={column.key}
                $right={column.right || (column.key === 'A' && row.A !== '-')}
                $fill={column.fill}
                $cut={column.cut}
                $line={line}
                $selected={selected}
                $current={selected && column.key === 'A'}
              >
                {column.link ? <a href={row[column.key]}>{row[column.key]}</a> : row[column.key]}
              </Cell>
            ))}
            <td />
          </tr>
        );
      })}
    </tbody>
  </Grid>
);

const WorkWindow = () => (
  <ThemeProvider theme={brownTheme}>
    <Window $left={10}>
      <Strip tabs={workTabs} />
      <AddressBar>
        <Navigation />
        <Omnibox>
          <SiteInfo aria-label="Site information"><TuneIcon /></SiteInfo>
          <UrlInput
            aria-label="Address"
            $host={134}
            $large
            defaultValue="docs.google.com/spreadsheets/d/15msZf7CnkNuegKnS-0EQlYoHM0EGp_X8oMZukbKtXTo/edit?gid=0#gid=0"
          />
          <BarButton aria-label="Translate" $wide={40}><MdGTranslate size={21} /></BarButton>
          <BarButton aria-label="Zoom" $wide={40}><MdZoomOut size={22} /></BarButton>
          <BarButton aria-label="Bookmark" $wide={40}><MdStarBorder size={22} /></BarButton>
        </Omnibox>
        <BarButton aria-label="Blocker">
          <ShieldIcon />
          <ExtensionBadge>1</ExtensionBadge>
        </BarButton>
        <BarButton aria-label="Link tool"><LinkExtensionIcon /></BarButton>
        <BarButton aria-label="Sync tool"><CycleIcon /></BarButton>
        <BarButton aria-label="Extensions"><MdOutlineExtension size={23} /></BarButton>
        <BarDivider />
        <BarButton aria-label="Profile"><Avatar>T</Avatar></BarButton>
        <BarButton aria-label="Menu"><MdMoreVert size={20} /></BarButton>
      </AddressBar>
      <Sheet>
        <SheetHeader />
        <SheetToolbar />
        <FormulaBar>
          <NameBox aria-label="Name box" defaultValue="766:766" />
          <MdArrowDropDown size={16} />
          <FormulaMark htmlFor="formula">fx</FormulaMark>
          <FormulaInput id="formula" defaultValue="0" />
        </FormulaBar>
        <GridArea>
          <Viewport>
            <SheetGrid />
            <AddRows>
              <button>Add</button>
              <input id="rowCount" defaultValue="1000" />
              <label htmlFor="rowCount">more rows at the bottom</label>
            </AddRows>
          </Viewport>
          <VerticalScroll>
            <button aria-label="Scroll up"><Triangle d="M0 5 3 1l3 4z" /></button>
            <button aria-label="Scroll down"><Triangle d="M0 1l3 4 3-4z" /></button>
          </VerticalScroll>
        </GridArea>
        <HorizontalScroll>
          <Track />
          <button aria-label="Scroll left"><Triangle d="M5 0 1 3l4 3z" /></button>
          <button aria-label="Scroll right"><Triangle d="M1 0l4 3-4 3z" /></button>
        </HorizontalScroll>
        <SheetBar>
          <SheetBarButton aria-label="Add sheet"><MdAdd size={16} /></SheetBarButton>
          <SheetBarButton aria-label="All sheets"><MdMenu size={16} /></SheetBarButton>
          <SheetTab>
            Sheet1
            <MdArrowDropDown size={16} />
          </SheetTab>
          <CountChip>
            Count: 49
            <MdArrowDropDown size={16} />
          </CountChip>
          <SheetBarButton aria-label="Show side panel"><MdChevronLeft size={18} /></SheetBarButton>
        </SheetBar>
      </Sheet>
    </Window>
  </ThemeProvider>
);

const App = () => (
  <>
    <GlobalStyle />
    <Desktop>
      <IncognitoWindow />
      <WorkWindow />
      <Mark $x={178} $y={56} $w={752} $h={59} $line={4} $color="#66cc00" />
      <Mark $x={38} $y={862} $w={1843} $h={43} $line={7} $color="#ff0000" />
      <Mark $x={448} $y={875} $w={111} $h={25} $line={4} $color="#66cc00" />
      <Arrow width="70" height="580" viewBox="460 315 70 580" aria-hidden="true">
        <path d="M484 360 511 888" stroke="#66cc00" strokeWidth="7" />
        <path d="M480 323 497 364 469 365z" fill="#66cc00" />
      </Arrow>
    </Desktop>
  </>
);

export default App;
